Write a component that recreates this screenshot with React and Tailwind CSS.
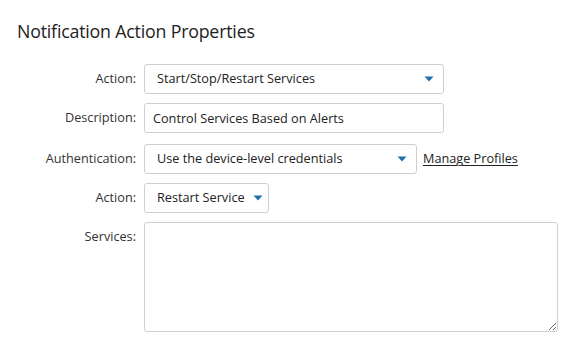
import { useState } from "react";

function Caret() {
    return (
        <svg width="10" height="6" viewBox="0 0 10 6" className="shrink-0">
            <path d="M0.5 0.5h9L5 5.5z" fill="#1f70a8" />
        </svg>
    );
}

function FakeSelect({ value, width }) {
    return (
        <div
            className={`flex items-center justify-between gap-2 h-[30px] pl-3 pr-[9px] border border-[#cfcfcf] rounded-[3px] bg-white text-[12.7px] text-[#222] ${width}`}
        >
            <span className="whitespace-nowrap">{value}</span>
            <Caret />
        </div>
    );
}

function Row({ label, children, extra = "" }) {
    return (
        <>
            <div className={`text-right text-[12.7px] text-[#333] leading-5 pt-[4px] ${extra}`}>{label}</div>
            <div className={`flex items-center gap-[6px] ${extra}`}>{children}</div>
        </>
    );
}

export default function App() {
    const [description, setDescription] = useState("Control Services Based on Alerts");

    return (
        <div className="bg-white w-[583px] h-[342px] pl-[17px] pt-[19px] font-['Open_Sans',sans-serif]">
            <h1 className="text-[17.8px] leading-6 text-[#222] tracking-[-0.2px]">Notification Action Properties</h1>

            <div className="grid grid-cols-[119px_1fr] gap-x-2 gap-y-[9px] mt-[21px]">
                <Row label="Action:">
                    <FakeSelect value="Start/Stop/Restart Services" width="w-[300px]" />
                </Row>

                <Row label="Description:">
                    <input
                        value={description}
                        onChange={(e) => setDescription(e.target.value)}
                        className="w-[300px] h-[30px] px-2 border border-[#cfcfcf] rounded-[3px] text-[12.7px] text-[#222] outline-none"
                    />
                </Row>

                <Row label="Authentication:" extra="mt-[2px]">
                    <FakeSelect value="Use the device-level credentials" width="w-[273px]" />
                    <a className="text-[12.7px] text-[#222] underline underline-offset-2">Manage Profiles</a>
                </Row>

                <Row label="Action:">
                    <FakeSelect value="Restart Service" width="w-[125px]" />
                </Row>

                <Row label="Services:">
                    <textarea className="w-[414px] h-[110px] border border-[#cfcfcf] rounded-[3px] outline-none resize" />
                </Row>
            </div>
        </div>
    );
}
